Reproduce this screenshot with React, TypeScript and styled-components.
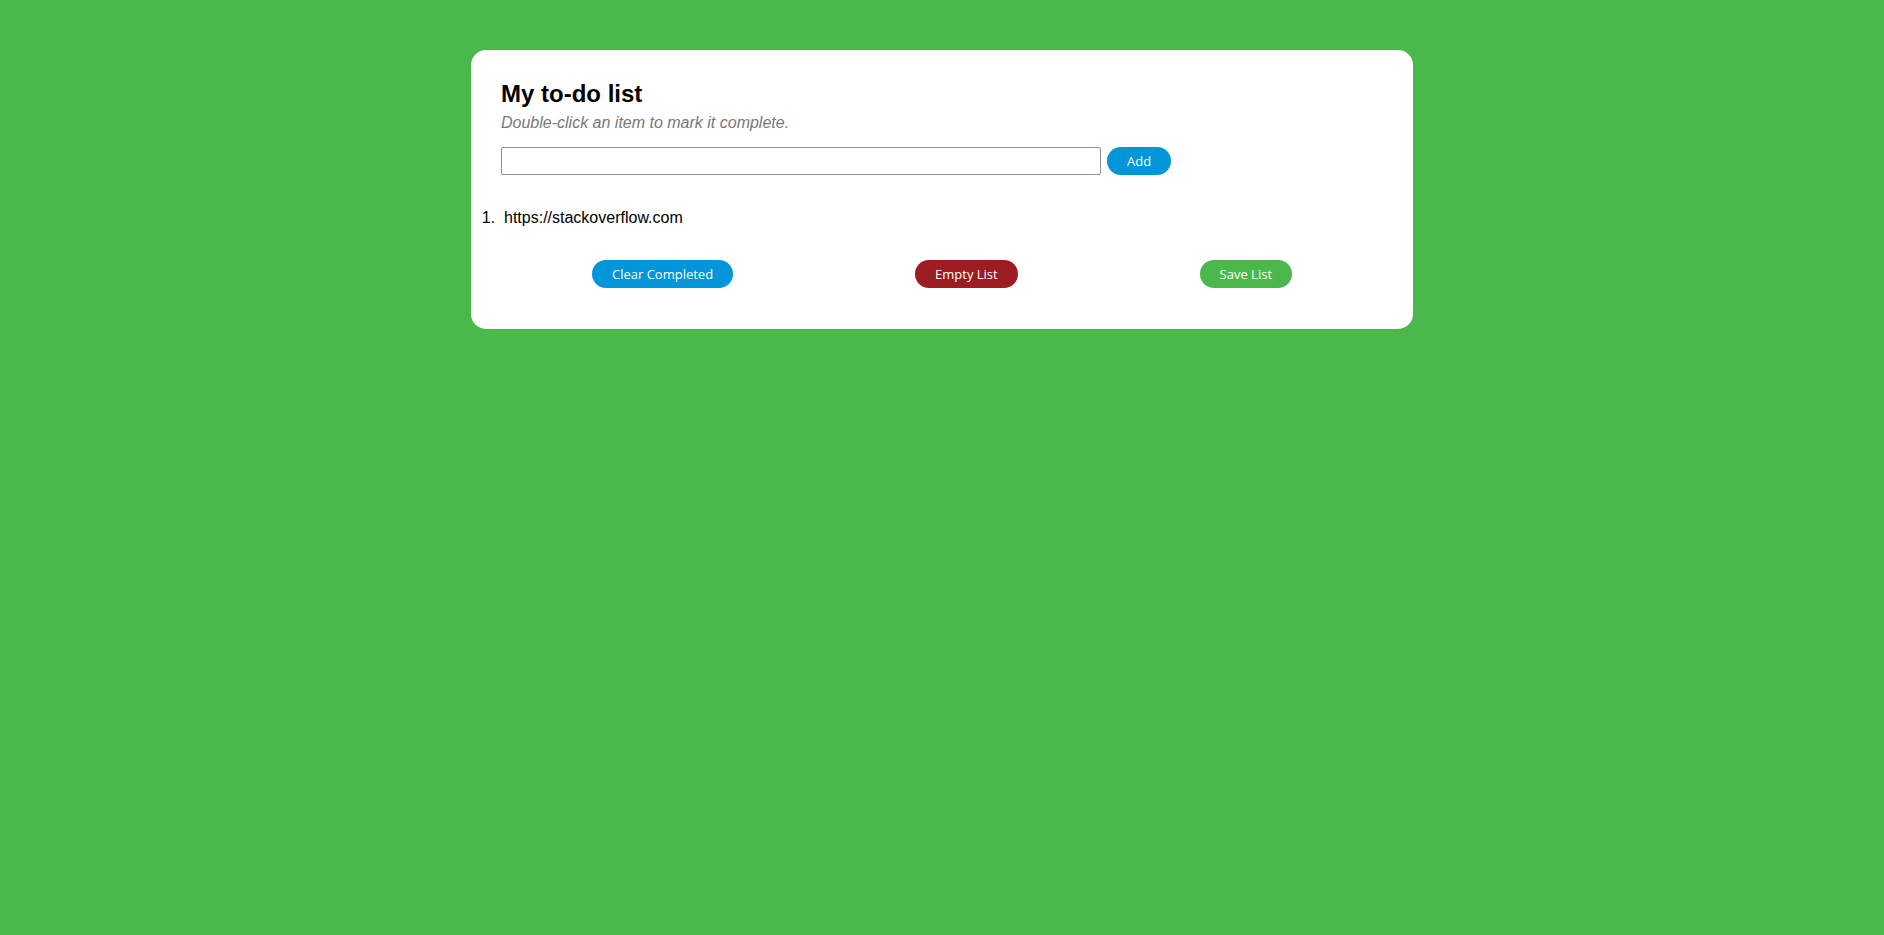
import React from "react";
import styled, { createGlobalStyle } from "styled-components";

const GlobalStyle = createGlobalStyle`
  html, body {
    margin: 0;
    padding: 0;
    background: #4bb84b;
    font-family: "Liberation Sans", Arial, sans-serif;
  }
  body {
    min-height: 100vh;
  }
`;

const Page = styled.div`
  padding-top: 50px;
  display: flex;
  justify-content: center;
`;

const Card = styled.main`
  box-sizing: border-box;
  width: 942px;
  background: #ffffff;
  border-radius: 15px;
  padding: 30px 30px 41px;
  display: flex;
  flex-direction: column;
`;

const Title = styled.h2`
  margin: 0 0 6px;
  font-size: 24px;
  font-weight: bold;
  color: #000;
  line-height: 27px;
`;

const Subtitle = styled.p`
  margin: 0;
  font-size: 16px;
  font-style: italic;
  color: #777777;
  line-height: 19px;
`;

const InputRow = styled.div`
  display: flex;
  align-items: center;
  gap: 6px;
  margin-top: 15px;
`;

const TextInput = styled.input`
  box-sizing: border-box;
  width: 600px;
  height: 28px;
  border: 1px solid #8f8f9d;
  border-radius: 2px;
  padding: 2px 4px;
  font-size: 14px;
  font-family: "Liberation Sans", Arial, sans-serif;
  outline: none;
`;

const PillButton = styled.button<{ $bg: string }>`
  box-sizing: border-box;
  height: 28px;
  padding: 0 20px;
  border: none;
  border-radius: 14px;
  background: ${(p) => p.$bg};
  color: #ffffff;
  font-family: "Open Sans", sans-serif;
  font-size: 13px;
  line-height: 28px;
  cursor: pointer;
`;

const List = styled.ol`
  margin: 34px 0 0;
  padding-left: 3px;
  list-style: decimal;
`;

const Item = styled.li`
  font-size: 16px;
  line-height: 18px;
  color: #000;

  &::marker {
    content: counter(list-item) ".  ";
  }
`;

const ButtonRow = styled.div`
  display: flex;
  justify-content: space-around;
  margin-top: 33px;
`;

export default function App() {
  return (
    <>
      <GlobalStyle />
      <Page>
        <Card>
          <Title>My to-do list</Title>
          <Subtitle>Double-click an item to mark it complete.</Subtitle>
          <InputRow>
            <TextInput type="text" />
            <PillButton $bg="#0096d9">Add</PillButton>
          </InputRow>
          <List>
            <Item>https://stackoverflow.com</Item>
          </List>
          <ButtonRow>
            <PillButton $bg="#0096d9">Clear Completed</PillButton>
            <PillButton $bg="#9c1c21">Empty List</PillButton>
            <PillButton $bg="#4bb84b">Save List</PillButton>
          </ButtonRow>
        </Card>
      </Page>
    </>
  );
}
